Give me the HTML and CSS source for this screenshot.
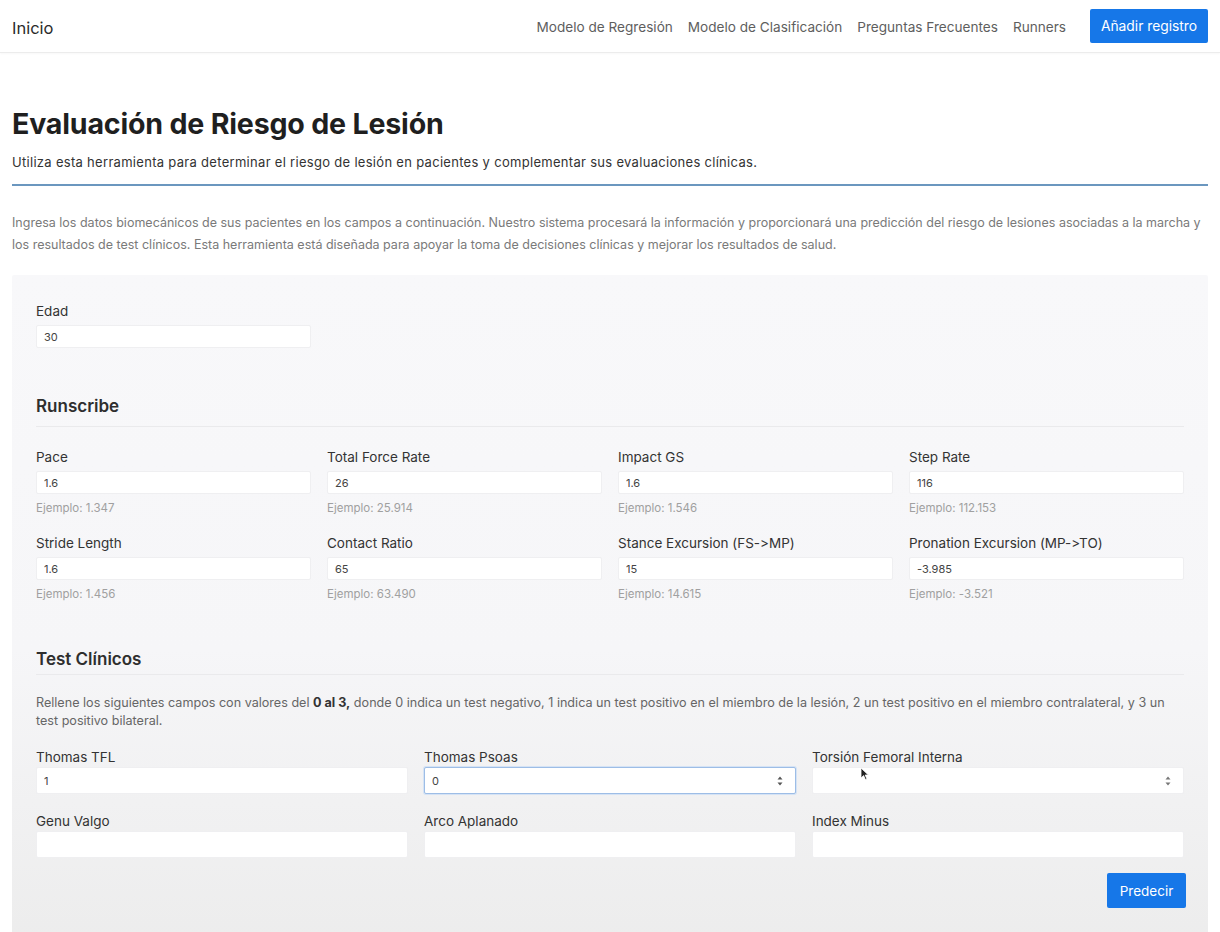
FILE: index.html
```html
<!DOCTYPE html>
<html lang="es">
<head>
<meta charset="utf-8">
<title>Evaluación de Riesgo de Lesión</title>
<link rel="stylesheet" href="styles.css">
</head>
<body>
<nav class="navbar">
  <a class="brand" href="#">Inicio</a>
  <ul class="nav-links">
    <li><a href="#">Modelo de Regresión</a></li>
    <li><a href="#">Modelo de Clasificación</a></li>
    <li><a href="#">Preguntas Frecuentes</a></li>
    <li><a href="#">Runners</a></li>
  </ul>
  <button class="btn btn-nav" type="button">Añadir registro</button>
</nav>

<main class="page">
  <h1 class="title">Evaluación de Riesgo de Lesión</h1>
  <p class="lead">Utiliza esta herramienta para determinar el riesgo de lesión en pacientes y complementar sus evaluaciones clínicas.</p>
  <hr class="rule">
  <p class="intro">Ingresa los datos biomecánicos de sus pacientes en los campos a continuación. Nuestro sistema procesará la información y proporcionará una predicción del riesgo de lesiones asociadas a la marcha y los resultados de test clínicos. Esta herramienta está diseñada para apoyar la toma de decisiones clínicas y mejorar los resultados de salud.</p>

  <form class="card">
    <div class="field field-age">
      <label>Edad</label>
      <input class="input" type="text" value="30">
    </div>

    <h2 class="section-title section-run">Runscribe</h2>
    <div class="grid4">
      <div class="field"><label>Pace</label><input class="input" type="text" value="1.6"><small class="help">Ejemplo: 1.347</small></div>
      <div class="field"><label>Total Force Rate</label><input class="input" type="text" value="26"><small class="help">Ejemplo: 25.914</small></div>
      <div class="field"><label>Impact GS</label><input class="input" type="text" value="1.6"><small class="help">Ejemplo: 1.546</small></div>
      <div class="field"><label>Step Rate</label><input class="input" type="text" value="116"><small class="help">Ejemplo: 112.153</small></div>
      <div class="field"><label>Stride Length</label><input class="input" type="text" value="1.6"><small class="help">Ejemplo: 1.456</small></div>
      <div class="field"><label>Contact Ratio</label><input class="input" type="text" value="65"><small class="help">Ejemplo: 63.490</small></div>
      <div class="field"><label>Stance Excursion (FS-&gt;MP)</label><input class="input" type="text" value="15"><small class="help">Ejemplo: 14.615</small></div>
      <div class="field"><label>Pronation Excursion (MP-&gt;TO)</label><input class="input" type="text" value="-3.985"><small class="help">Ejemplo: -3.521</small></div>
    </div>

    <h2 class="section-title section-test">Test Clínicos</h2>
    <p class="note">Rellene los siguientes campos con valores del <b>0 al 3,</b> donde 0 indica un test negativo, 1 indica un test positivo en el miembro de la lesión, 2 un test positivo en el miembro contralateral, y 3 un test positivo bilateral.</p>
    <div class="grid3">
      <div class="field"><label>Thomas TFL</label><input class="input input-lg" type="text" value="1"></div>
      <div class="field"><label>Thomas Psoas</label>
        <div class="spin-wrap"><input class="input input-lg is-focused" type="text" value="0"><svg class="spin" width="8" height="12" viewBox="0 0 8 12"><path d="M4 1.5 L6.5 4.5 H1.5 Z M4 10.5 L6.5 7.5 H1.5 Z" fill="#555"/></svg></div>
      </div>
      <div class="field"><label>Torsión Femoral Interna</label>
        <div class="spin-wrap"><input class="input input-lg" type="text" value=""><svg class="spin" width="8" height="12" viewBox="0 0 8 12"><path d="M4 1.5 L6.5 4.5 H1.5 Z M4 10.5 L6.5 7.5 H1.5 Z" fill="#777"/></svg>
          <svg class="cursor" width="9" height="14" viewBox="0 0 9 14"><path d="M1 1 L1 11 L3.6 8.6 L5.4 12.6 L6.9 11.9 L5.2 8 L8.4 8 Z" fill="#222" stroke="#fff" stroke-width="0.8"/></svg>
        </div>
      </div>
      <div class="field"><label>Genu Valgo</label><input class="input input-lg" type="text" value=""></div>
      <div class="field"><label>Arco Aplanado</label><input class="input input-lg" type="text" value=""></div>
      <div class="field"><label>Index Minus</label><input class="input input-lg" type="text" value=""></div>
    </div>
    <div class="actions">
      <button class="btn btn-submit" type="button">Predecir</button>
    </div>
  </form>
</main>
</body>
</html>
```

FILE: styles.css
```css
* { box-sizing: border-box; }

html, body {
  margin: 0;
  padding: 0;
  background: #ffffff;
  font-family: Inter, "Noto Sans", "Liberation Sans", sans-serif;
  font-feature-settings: "calt" 0, "liga" 0;
  color: #212529;
}

.navbar {
  height: 53px;
  display: flex;
  align-items: center;
  padding: 0 12px;
  border-bottom: 1px solid #ececec;
  box-shadow: 0 1px 2px rgba(0,0,0,0.03);
}

.brand {
  font-size: 16.5px;
  color: #2b2b2b;
  text-decoration: none;
  margin-top: 4px;
}

.nav-links {
  list-style: none;
  margin: 0 0 0 auto;
  padding: 0;
  display: flex;
  gap: 15px;
}

.nav-links a {
  font-size: 13.6px;
  color: #5e5e5e;
  text-decoration: none;
}

.btn {
  font-family: inherit;
  font-feature-settings: "calt" 0;
  border: none;
  background: #1677e8;
  color: #fff;
  border-radius: 2px;
  cursor: pointer;
}

.btn-nav {
  margin-left: 24px;
  height: 34px;
  width: 118px;
  font-size: 13.8px;
  padding: 0;
}

.page {
  padding: 0 12px;
}

.title {
  margin: 54px 0 0;
  font-size: 28.6px;
  line-height: 34px;
  font-weight: 700;
  color: #1f1f1f;
  letter-spacing: -0.2px;
}

.lead {
  margin: 12px 0 0;
  font-size: 13px;
  letter-spacing: 0.3px;
  line-height: 18px;
  color: #333;
}

.rule {
  margin: 13px 0 0;
  border: none;
  height: 2px;
  background: #6b97bf;
}

.intro {
  margin: 26px 0 0;
  font-size: 12.5px;
  line-height: 22px;
  color: #7a7a7a;
}

.card {
  margin-top: 19px;
  padding: 27px 24px 30px;
  background: linear-gradient(#f8f8fa 0%, #f6f6f8 55%, #ececec 100%);
  border-radius: 2px;
  min-height: 680px;
}

.field {
  display: flex;
  flex-direction: column;
}

.field label {
  font-size: 13.5px;
  line-height: 18px;
  color: #333;
}

.field-age {
  width: 275px;
}

.input {
  margin-top: 5px;
  height: 23px;
  width: 100%;
  border: 1px solid #efeff1;
  background: #fff;
  border-radius: 2px;
  font-family: inherit;
  font-feature-settings: "calt" 0;
  font-size: 11px;
  color: #444;
  padding: 0 7px;
  outline: none;
}

.help {
  margin-top: 7px;
  font-size: 11.5px;
  line-height: 14px;
  color: #a0a0a0;
}

.section-title {
  margin: 0;
  font-size: 17px;
  line-height: 22px;
  font-weight: 600;
  color: #2e2e2e;
  padding-bottom: 9px;
  border-bottom: 1px solid #eaeaec;
}

.section-run {
  margin-top: 47px;
}

.grid4 {
  margin-top: 21px;
  display: grid;
  grid-template-columns: repeat(4, 1fr);
  column-gap: 16px;
  row-gap: 19px;
}

.section-test {
  margin-top: 47px;
  padding-bottom: 4px;
}

.note {
  margin: 19px 0 0;
  font-size: 12.6px;
  line-height: 18px;
  color: #666;
}

.note b {
  color: #333;
}

.grid3 {
  margin-top: 18px;
  display: grid;
  grid-template-columns: repeat(3, 1fr);
  column-gap: 16px;
  row-gap: 18px;
}

.input-lg {
  margin-top: 1px;
  height: 27px;
}

.spin-wrap {
  position: relative;
}

.spin-wrap .input {
  margin-top: 1px;
}

.is-focused {
  border: 1px solid #9dbde6;
  box-shadow: 0 0 0 1px #d5e3f5;
}

.spin {
  position: absolute;
  right: 12px;
  top: 9px;
}

.cursor {
  position: absolute;
  left: 48px;
  top: 1px;
}

.actions {
  display: flex;
  justify-content: flex-end;
  margin-top: 15px;
}

.btn-submit {
  width: 79px;
  height: 35px;
  font-size: 13.5px;
  margin-right: -2px;
}
```
